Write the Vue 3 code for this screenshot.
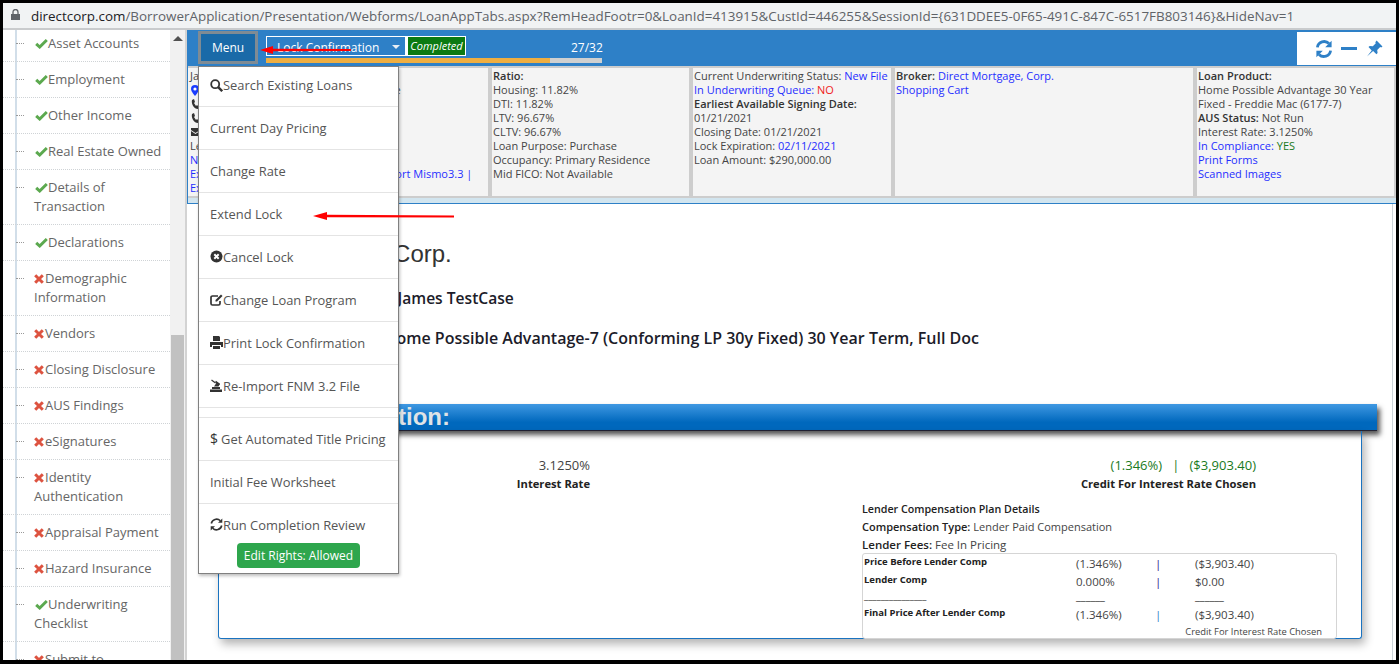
<script setup>
const nav = [
  { t: 'Asset Accounts', ok: true },
  { t: 'Employment', ok: true },
  { t: 'Other Income', ok: true },
  { t: 'Real Estate Owned', ok: true },
  { t: 'Details of Transaction', ok: true },
  { t: 'Declarations', ok: true },
  { t: 'Demographic Information', ok: false },
  { t: 'Vendors', ok: false },
  { t: 'Closing Disclosure', ok: false },
  { t: 'AUS Findings', ok: false },
  { t: 'eSignatures', ok: false },
  { t: 'Identity Authentication', ok: false },
  { t: 'Appraisal Payment', ok: false },
  { t: 'Hazard Insurance', ok: false },
  { t: 'Underwriting Checklist', ok: true },
  { t: 'Submit to', ok: false }
]
const menu = [
  { t: 'Search Existing Loans', i: 'search' },
  { t: 'Current Day Pricing' },
  { t: 'Change Rate' },
  { t: 'Extend Lock' },
  { t: 'Cancel Lock', i: 'cancel' },
  { t: 'Change Loan Program', i: 'edit' },
  { t: 'Print Lock Confirmation', i: 'print' },
  { t: 'Re-Import FNM 3.2 File', i: 'gavel' },
  { t: '', blank: true },
  { t: 'Get Automated Title Pricing', i: 'dollar' },
  { t: 'Initial Fee Worksheet' },
  { t: 'Run Completion Review', i: 'refresh' }
]
</script>

<template>
  <div class="frame">
    <div class="urlbar">
      <svg class="lock" width="9" height="11" viewBox="0 0 9 11"><path d="M0 5h9v6H0z" fill="#5f6368"/><path d="M2 5V3a2.5 2.5 0 0 1 5 0v2" fill="none" stroke="#5f6368" stroke-width="1.3"/></svg>
      <span class="url"><span class="host">directcorp.com</span>/BorrowerApplication/Presentation/Webforms/LoanAppTabs.aspx?RemHeadFootr=0&amp;LoanId=413915&amp;CustId=446255&amp;SessionId={631DDEE5-0F65-491C-847C-6517FB803146}&amp;HideNav=1</span>
    </div>

    <div class="body">
      <aside class="side">
        <div class="tree">
          <div v-for="n in nav" :key="n.t" class="node">
            <span class="tick"></span>
            <svg v-if="n.ok" class="mark" width="13" height="11" viewBox="0 0 13 11"><path d="M1.200 5.800l3.500 3.200L11.800 2" fill="none" stroke="#5ca94f" stroke-width="3"/></svg>
            <svg v-else class="mark markx" width="10" height="10" viewBox="0 0 10 10"><path d="M1.200 1.200l7.600 7.600M8.800 1.200L1.200 8.800" fill="none" stroke="#dd5340" stroke-width="3"/></svg><span class="nodetext">{{ n.t }}</span>
          </div>
        </div>
      </aside>
      <div class="scroll"><span class="up"></span><span class="thumb"></span></div>

      <main class="main">
        <div class="top">
          <header class="head">
            <button class="menubtn">Menu</button>
            <div class="status">
              <div class="selects">
                <span class="sel">Lock Confirmation<span class="caret"></span></span>
                <span class="done">Completed</span>
              </div>
              <div class="progress"><span class="fill"></span></div>
            </div>
            <span class="count">27/32</span>
            <div class="tools">
              <svg width="18" height="18" viewBox="0 0 18 18"><path d="M2.400 7.400A6.800 6.800 0 0 1 14 3.600M15.600 10.600A6.800 6.800 0 0 1 4 14.400" fill="none" stroke="#2e80c7" stroke-width="2.800"/><path d="M16.600 0.800v6.400h-6.400zM1.400 17.200v-6.400h6.400z" fill="#2e80c7"/></svg>
              <span class="minus"></span>
              <svg width="17" height="17" viewBox="0 0 17 17"><path d="M10.600.5l5.900 5.900-1.300 1-1-.5-3 3 .4 3.100-1.200 1.200-3.300-3.300L1 16.500l4.700-6.100-3.200-3.300 1.200-1.200 3.100.4 3-3-.5-1z" fill="#2e80c7"/></svg>
            </div>
          </header>

          <div class="info">
            <div class="panel first">
              <div>James TestCase</div>
              <div class="ico"><svg width="8" height="11" viewBox="0 0 8 11"><path d="M4 0a4 4 0 0 1 4 4c0 2.500-4 7-4 7S0 6.500 0 4a4 4 0 0 1 4-4z" fill="#1a3cff"/><circle cx="4" cy="4" r="1.600" fill="#fff"/></svg><span class="gap">123 Test Lane</span></div>
              <div class="ico"><svg width="9" height="10" viewBox="0 0 9 10"><path d="M1 1l2-1 1 3-1 1 2 3 1-1 2 2-1 2C3 10 0 5 1 1z" fill="#333"/></svg></div>
              <div class="ico"><svg width="9" height="10" viewBox="0 0 9 10"><path d="M1 1l2-1 1 3-1 1 2 3 1-1 2 2-1 2C3 10 0 5 1 1z" fill="#333"/></svg></div>
              <div class="ico"><svg width="9" height="8" viewBox="0 0 9 8"><path d="M0 0h9v2L4.500 5 0 2zM0 3l4.500 3L9 3v5H0z" fill="#333"/></svg></div>
              <div>Lead Source</div>
              <div><a>New Loan</a></div>
              <div class="exports"><a>Export FNM 3.2 | Export MCL Files | Export Mismo3.3 |</a></div>
              <div><a>Export</a></div>
            </div>
            <div class="panel">
              <div><b>Ratio:</b></div>
              <div>Housing: 11.82%</div>
              <div>DTI: 11.82%</div>
              <div>LTV: 96.67%</div>
              <div>CLTV: 96.67%</div>
              <div>Loan Purpose: Purchase</div>
              <div>Occupancy: Primary Residence</div>
              <div>Mid FICO: Not Available</div>
            </div>
            <div class="panel">
              <div>Current Underwriting Status: <a>New File</a></div>
              <div><a>In Underwriting Queue:</a> <span class="red">NO</span></div>
              <div><b>Earliest Available Signing Date:</b></div>
              <div>01/21/2021</div>
              <div>Closing Date: 01/21/2021</div>
              <div>Lock Expiration: <a>02/11/2021</a></div>
              <div>Loan Amount: $290,000.00</div>
            </div>
            <div class="panel">
              <div><b>Broker:</b> <a>Direct Mortgage, Corp.</a></div>
              <div><a>Shopping Cart</a></div>
            </div>
            <div class="panel">
              <div><b>Loan Product:</b></div>
              <div>Home Possible Advantage 30 Year Fixed - Freddie Mac (6177-7)</div>
              <div><b>AUS Status:</b> Not Run</div>
              <div>Interest Rate: 3.1250%</div>
              <div><a>In Compliance:</a> <span class="green">YES</span></div>
              <div><a>Print Forms</a></div>
              <div><a>Scanned Images</a></div>
            </div>
          </div>
          <div class="band"></div>
        </div>

        <section class="content">
          <h1 class="lender">Direct Mortgage, Corp.</h1>
          <p class="borrower"><span class="lbl">Borrower:</span> James TestCase</p>
          <p class="program"><span class="lbl">Loan Program:</span> Home Possible Advantage-7 (Conforming LP 30y Fixed) 30 Year Term, Full Doc</p>
          <h2 class="bar">Lock Confirmation:</h2>
          <div class="card">
            <div class="figures">
              <div class="fig fig-l">
                <div class="val">3.1250%</div>
                <div class="cap">Interest Rate</div>
              </div>
              <div class="fig fig-r">
                <div class="val green">(1.346%) &nbsp; | &nbsp; ($3,903.40)</div>
                <div class="cap">Credit For Interest Rate Chosen</div>
              </div>
            </div>
            <div class="comp">
              <div class="comp1 plan"><b>Lender Compensation Plan Details</b></div>
              <div class="comp1"><b>Compensation Type:</b> Lender Paid Compensation</div>
              <div class="comp2"><b>Lender Fees:</b> Fee In Pricing</div>
              <div class="tbl">
                <b class="k">Price Before Lender Comp</b><span>(1.346%)</span><span class="pipe">|</span><span>($3,903.40)</span>
                <b class="k">Lender Comp</b><span>0.000%</span><span class="pipe">|</span><span>$0.00</span>
                <span class="k rule">_______________</span><span class="rule">______</span><span></span><span class="rule">______</span>
                <b class="k">Final Price After Lender Comp</b><span>(1.346%)</span><span class="pipe lt">|</span><span>($3,903.40)</span>
                <span class="foot">Credit For Interest Rate Chosen</span>
              </div>
            </div>
          </div>
        </section>
      </main>
    </div>

    <nav class="menu">
      <div v-for="m in menu" :key="m.t" class="item" :class="{ blank: m.blank }">
        <svg v-if="m.i === 'search'" class="mi" width="13" height="13" viewBox="0 0 13 13"><circle cx="5.200" cy="5.200" r="4" fill="none" stroke="#333" stroke-width="1.800"/><path d="M8.200 8.200l4 4" stroke="#333" stroke-width="2.400"/></svg>
        <svg v-else-if="m.i === 'cancel'" class="mi" width="13" height="13" viewBox="0 0 13 13"><circle cx="6.500" cy="6.500" r="6" fill="#333"/><path d="M4.300 4.300l4.400 4.400M8.700 4.300l-4.400 4.400" stroke="#fff" stroke-width="2"/></svg>
        <svg v-else-if="m.i === 'edit'" class="mi" width="13" height="13" viewBox="0 0 13 13"><path d="M10 8v2.500a1.500 1.500 0 0 1-1.500 1.500h-6A1.500 1.500 0 0 1 1 10.500v-6A1.500 1.500 0 0 1 2.500 3H8" fill="none" stroke="#333" stroke-width="1.700"/><path d="M11 1.500l1.500 1.500L7 8.500H5.500V7z" fill="#333"/></svg>
        <svg v-else-if="m.i === 'print'" class="mi" width="13" height="13" viewBox="0 0 13 13"><path d="M3 0h6l1 1v4H3z" fill="#333"/><path d="M0 6h13v5h-2V9H2v2H0z" fill="#333"/><path d="M3 10h7v3H3z" fill="#333"/></svg>
        <svg v-else-if="m.i === 'gavel'" class="mi" width="13" height="13" viewBox="0 0 13 13"><path d="M0 10.500h12V13H0z" fill="#333"/><path d="M2 10h8V8H2zM4 7.500l3-4.500 3 2-1.500 2.500z" fill="#333"/><path d="M5.500 2.500l4 2.800" stroke="#333" stroke-width="1.600"/><path d="M1.500 1l4 3" stroke="#333" stroke-width="1.200"/></svg>
        <svg v-else-if="m.i === 'refresh'" class="mi" width="13" height="13" viewBox="0 0 13 13"><path d="M1.300 5.500A5.300 5.300 0 0 1 10.300 2.800M11.700 7.500A5.300 5.300 0 0 1 2.700 10.200" fill="none" stroke="#333" stroke-width="1.600"/><path d="M12.300 .5v4.300H8zM.7 12.500V8.200H5z" fill="#333"/></svg>
        <span v-else-if="m.i === 'dollar'" class="dollar">$</span>
        <span>{{ m.t }}</span>
      </div>
      <div class="rights"><span class="badge">Edit Rights: Allowed</span></div>
    </nav>

    <svg class="arrow a1" width="92" height="10" viewBox="0 0 92 10"><path d="M13 3.800L91 4v2L13 6.200 13 9 0 5 13 1z" fill="#f00"/></svg>
    <svg class="arrow a2" width="142" height="10" viewBox="0 0 142 10"><path d="M14 3.800L141 4.500v2L14 6.200 14 9 0 5 14 1z" fill="#f00"/></svg>
  </div>
</template>

<style>
html, body { margin: 0; background: #000; }
</style>

<style scoped>
.frame {
  position: relative;
  width: 1399px;
  height: 664px;
  box-sizing: border-box;
  border: solid #000;
  border-width: 3px 3px 4px;
  background: #fff;
  display: flex;
  flex-direction: column;
  overflow: hidden;
  font-family: "Open Sans", "Noto Sans", sans-serif;
  color: #444;
}
a { color: #1f2eff; }
b { font-weight: 700; }

.urlbar {
  flex: none;
  height: 25px;
  box-sizing: content-box;
  background: #f1f3f4;
  border-bottom: 2px solid #c9cbcd;
  display: flex;
  align-items: center;
  padding-left: 8px;
  gap: 11px;
}
.lock { flex: none; margin-bottom: 2px; }
.url { font-size: 13.420px; color: #5f6368; white-space: nowrap; }
.host { color: #202124; }

.body { flex: 1; display: flex; min-height: 0; }

.side { flex: none; width: 167px; overflow: hidden; }
.tree {
  margin-top: -4px;
  background-image: radial-gradient(circle, #9db8cf 0.6px, transparent 0.8px);
  background-size: 2px 2px;
  background-position: 12px 0;
  background-repeat: repeat-y;
}
.node {
  position: relative;
  padding: 8px 0 8px 31px;
  border-bottom: 1px dotted #cfd3d6;
  font-size: 13px;
  line-height: 19px;
  color: #666;
}
.tick {
  position: absolute;
  left: 13px;
  top: 17px;
  width: 8px;
  border-top: 1px dotted #999;
}
.mark { margin: 0 0 0 1px; vertical-align: -1px; }
.markx { margin-right: 1px; margin-left: 0; }

.scroll { flex: none; width: 15px; background: #f1f1f1; position: relative; }
.up {
  position: absolute; left: 3px; top: 6px;
  border: 5px solid transparent; border-top: 0; border-bottom: 5px solid #505050;
}
.thumb { position: absolute; left: 1px; right: 1px; top: 305px; bottom: 0; background: #c1c1c1; }

.main {
  flex: 1;
  min-width: 0;
  border-left: 2px solid #d3d3d3;
  display: flex;
  flex-direction: column;
  overflow: hidden;
}
.top { flex: none; }
.head {
  height: 36px;
  background: #2e80c7;
  display: flex;
  align-items: flex-start;
}
.menubtn {
  margin: 1px 0 0 11px;
  width: 60px;
  height: 33px;
  box-sizing: border-box;
  border: 3px solid #7f8b94;
  background: #1a6aa8;
  color: #fff;
  font: 12px "Open Sans", sans-serif;
  padding: 0;
}
.status { margin: 6px 0 0 8px; width: 336px; }
.selects { display: flex; height: 20px; }
.sel {
  position: relative;
  width: 141px;
  box-sizing: border-box;
  border: 1px solid #fff;
  border-right-width: 2px;
  color: #fff;
  font-size: 12px;
  line-height: 21px;
  padding-left: 10px;
  overflow: hidden;
  white-space: nowrap;
}
.caret {
  position: absolute; right: 5px; top: 8px;
  border: 4px solid transparent; border-bottom: 0; border-top: 4px solid #e8eef4;
}
.done {
  width: 59px;
  box-sizing: border-box;
  border: 1px solid #fff;
  background: #0b7a12;
  color: #fff;
  font-size: 11px;
  font-style: italic;
  line-height: 18px;
  text-align: center;
}
.progress { height: 5px; margin-top: 2px; background: #cfd0d0; }
.fill { display: block; width: 284px; height: 5px; background: #efae41; }
.count { margin: 9px 0 0 -31px; color: #fff; font-size: 12px; line-height: 17px; }
.tools {
  margin: 2px 0 0 auto;
  width: 99px;
  height: 33px;
  background: #fff;
  display: flex;
  align-items: center;
  padding-left: 18px;
  box-sizing: border-box;
}
.minus { width: 16px; height: 3px; background: #2e80c7; margin: 0 9px 0 8px; }

.info {
  box-sizing: border-box;
  height: 132px;
  background: #cdcdcd;
  border-left: 1px solid #2e80c7;
  padding: 2px 2px 2px 0;
  display: grid;
  grid-template-columns: 300px 197px 198px 298px 197px;
  gap: 4px;
}
.panel {
  background: #f4f4f4;
  font-size: 11px;
  line-height: 14px;
  padding: 1px 0 0 1px;
  color: #444;
  overflow: hidden;
}
.panel.first { padding-left: 2px; }
.panel b { font-weight: 600; color: #333; }
.ico { height: 14px; display: flex; align-items: center; padding-left: 1px; }
.gap { margin-left: 131px; color: #444; white-space: nowrap; }
.exports { white-space: nowrap; }
.red { color: #f01c1c; }
.green { color: #197a22; }
.band {
  height: 5px;
  background: #d2e5ef;
  border-left: 1px solid #2e80c7;
  border-bottom: 1px solid #2e80c7;
}

.content {
  flex: 1;
  min-height: 0;
  border-right: 1px solid #ccd3d8;
  margin-right: 3px;
  color: #1c1c2a;
}
.lender {
  margin: 35px 0 0 22px;
  font: 400 24px/30px "Liberation Sans", Arial, sans-serif;
  color: #333;
}
.borrower {
  margin: 18px 0 0 131px;
  font-size: 15.600px;
  line-height: 22px;
  font-weight: 600;
}
.program {
  margin: 18px 0 0 80px;
  font-size: 16px;
  line-height: 22px;
  font-weight: 600;
  white-space: nowrap;
}
.bar {
  margin: 55px 19px 0 31px;
  width: 1159px;
  height: 27px;
  box-sizing: border-box;
  padding-left: 12px;
  background: linear-gradient(#3f98e2, #0068bd 70%);
  border-bottom: 1px solid #223;
  box-shadow: 3px 4px 5px #555;
  font: 700 24px/26px "Liberation Sans", Arial, sans-serif;
  color: #dfe3e6;
}
.card {
  margin-left: 31px;
  width: 1144px;
  height: 208px;
  box-sizing: border-box;
  border: 1px solid #1a73c0;
  border-top: 0;
  border-radius: 0 0 3px 3px;
  box-shadow: 3px 5px 10px rgba(0,0,0,.3);
  padding-top: 23px;
  position: relative;
}
.figures { display: flex; height: 46px; }
.fig { text-align: right; flex: none; }
.fig-l { width: 371px; }
.fig-r { width: 300px; margin-left: 366px; }
.val { font-size: 13px; line-height: 20px; color: #444; white-space: nowrap; margin-top: 1px; }
.val.green { color: #197a22; }
.cap { font-size: 11.200px; line-height: 17px; font-weight: 700; color: #222; white-space: nowrap; }
.comp { margin-left: 643px; font-size: 11px; color: #444; }
.comp b { color: #222; font-weight: 600; }
.comp1 { line-height: 18px; }
.plan { font-size: 10.700px; }
.comp2 { line-height: 17px; font-size: 11.500px; }
.tbl {
  width: 475px;
  height: 86px;
  box-sizing: border-box;
  border: 1px solid #d5d5d5;
  border-radius: 3px;
  padding: 1px 0 0 1px;
  display: grid;
  grid-template-columns: 212px 79px 40px 1fr;
  grid-template-rows: 18px 18px 15px 18px;
  font-size: 11.500px;
  line-height: 18px;
  position: relative;
}
.tbl .k { font-size: 9.500px; line-height: 14px; font-weight: 700; color: #222; }
.pipe { color: #2c2c8c; }
.lt { color: #2e80c7; }
.rule { line-height: 10px; color: #333; font-size: 11px; }
.tbl .k.rule { font-weight: 400; line-height: 10px; }
.foot {
  position: absolute; right: 14px; bottom: 0;
  font-size: 9.400px; line-height: 12px;
}

.menu {
  position: absolute;
  left: 195px;
  top: 63px;
  width: 201px;
  height: 508px;
  box-sizing: border-box;
  background: #fff;
  border: 1px solid #808080;
  box-shadow: 1px 2px 3px rgba(0,0,0,.25);
  font-size: 12.900px;
  color: #555;
}
.item {
  height: 43px;
  box-sizing: border-box;
  border-bottom: 1px solid #e4e4e4;
  display: flex;
  align-items: center;
  padding: 0 0 1px 11px;
  white-space: nowrap;
}
.item:first-child { height: 40px; padding: 0 0 3px 11px; }
.item.blank { height: 10px; padding: 0; }
.item:nth-child(12) { border-bottom: 0; padding: 0 0 2px 11px; }
.mi { flex: none; }
.dollar { font-size: 14px; color: #333; margin-right: 3px; }
.rights { display: flex; justify-content: center; margin-top: -4px; }
.badge {
  background: #2ea64d;
  color: #fff;
  width: 123px;
  height: 25px;
  line-height: 25px;
  border-radius: 4px;
  text-align: center;
  font-size: 12px;
}
.arrow { position: absolute; }
.a1 { left: 257px; top: 42px; }
.a2 { left: 310px; top: 208px; }
</style>
